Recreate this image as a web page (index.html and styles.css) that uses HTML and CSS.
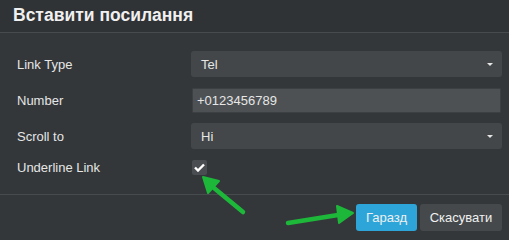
FILE: index.html
```html
<!DOCTYPE html>
<html>
<head>
<meta charset="utf-8">
<link rel="stylesheet" href="styles.css">
</head>
<body>
<div class="modal">
  <div class="header">Вставити посилання</div>
  <div class="body">
    <div class="row">
      <div class="label">Link Type</div>
      <div class="control select">Tel<span class="caret"></span></div>
    </div>
    <div class="row">
      <div class="label">Number</div>
      <div class="control input">+0123456789</div>
    </div>
    <div class="row">
      <div class="label">Scroll to</div>
      <div class="control select">Hi<span class="caret"></span></div>
    </div>
    <div class="row row-check">
      <div class="label">Underline Link</div>
      <div class="checkbox">
        <svg width="11" height="9" viewBox="0 0 11 9"><path d="M1 4.5 L4 7.5 L10 1.5" fill="none" stroke="#fff" stroke-width="2.4"/></svg>
      </div>
    </div>
  </div>
  <div class="footer">
    <button class="btn btn-primary">Гаразд</button>
    <button class="btn btn-default">Скасувати</button>
  </div>
  <svg class="arrows" width="509" height="240" viewBox="0 0 509 240">
    <g fill="#1db83a" stroke="#1db83a" stroke-linecap="round" stroke-linejoin="round">
      <line x1="243" y1="212" x2="214" y2="188" stroke-width="4.5"/>
      <polygon points="203,177 219,181 208,193" stroke-width="2"/>
      <line x1="288" y1="223" x2="338" y2="215" stroke-width="4.5"/>
      <polygon points="353,213 337,206 339,223" stroke-width="2"/>
    </g>
  </svg>
</div>
</body>
</html>
```
FILE: styles.css
```css
html, body {
  margin: 0;
  padding: 0;
  background: #33373a;
}
.modal {
  position: relative;
  width: 509px;
  height: 240px;
  background: #33373a;
  font-family: "Liberation Sans", Arial, sans-serif;
  color: #e6e6e6;
  font-size: 13px;
  overflow: hidden;
}
.header {
  height: 33px;
  box-sizing: border-box;
  padding: 5px 0 0 13px;
  font-size: 17.5px;
  font-weight: bold;
  color: #f0f0f0;
  border-bottom: 1px solid #474b4e;
  background: #303336;
}
.body {
  padding: 18px 7px 19px 17px;
  display: flex;
  flex-direction: column;
  gap: 10px;
}
.row {
  display: flex;
  align-items: center;
  height: 26px;
}
.row-check {
  height: 16px;
}
.label {
  width: 174px;
  flex: none;
}
.control {
  flex: 1;
  height: 26px;
  box-sizing: border-box;
  display: flex;
  align-items: center;
  border-radius: 3px;
}
.select {
  background: #43474a;
  padding: 0 10px;
  position: relative;
}
.input {
  background: #4d5154;
  height: 25px;
  padding: 0 4px;
  margin-left: 1px;
  margin-right: 1px;
  border-radius: 1px;
  border: 1px solid #3c4043;
}
.caret {
  position: absolute;
  right: 9px;
  top: 12px;
  width: 0;
  height: 0;
  border-left: 3px solid transparent;
  border-right: 3px solid transparent;
  border-top: 3px solid #e6e6e6;
}
.checkbox {
  width: 15px;
  height: 15px;
  margin-left: 1px;
  background: #4a4e52;
  border-radius: 2px;
  display: flex;
  align-items: center;
  justify-content: center;
}
.footer {
  border-top: 1px solid #474b4e;
  padding: 9px 7px 8px 0;
  display: flex;
  justify-content: flex-end;
  gap: 3px;
}
.btn {
  font-family: "Liberation Sans", Arial, sans-serif;
  font-size: 13px;
  height: 27px;
  border: none;
  border-radius: 3px;
  color: #f0f0f0;
  padding: 0;
}
.btn-primary {
  background: #2ea5d9;
  width: 61px;
}
.btn-default {
  background: #45494c;
  width: 82px;
}
.arrows {
  position: absolute;
  left: 0;
  top: 0;
  pointer-events: none;
}
```
